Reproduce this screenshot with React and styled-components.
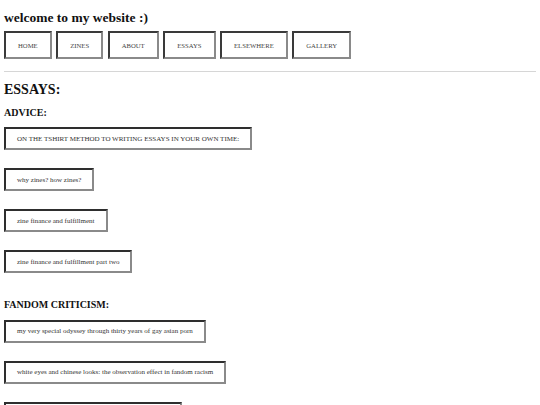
import styled, { createGlobalStyle } from 'styled-components';

const GlobalStyle = createGlobalStyle`
  html, body {
    margin: 0;
    padding: 0;
    background: #ffffff;
  }
  body {
    font-family: "Liberation Serif", "Times New Roman", serif;
    color: #111111;
  }
`;

const Page = styled.div`
  display: flex;
  flex-direction: column;
  padding: 10px 4px 0;
`;

const Title = styled.h1`
  font-size: 13.5px;
  font-weight: bold;
  line-height: 15px;
  margin: 0;
`;

const Nav = styled.nav`
  display: flex;
  gap: 4.5px;
  margin-top: 6px;
`;

const NavButton = styled.a`
  display: flex;
  align-items: center;
  height: 28px;
  box-sizing: border-box;
  padding: 0 12px;
  font-size: 6.7px;
  text-transform: uppercase;
  color: #444444;
  border: 2px solid;
  border-color: #3a3a3a #8a8a8a #8a8a8a #3a3a3a;
  cursor: pointer;
`;

const Rule = styled.hr`
  border: none;
  border-top: 1px solid #d6d6d6;
  margin: 12px 0 0;
  width: 100%;
`;

const PageHeading = styled.h2`
  font-size: 14px;
  line-height: 15.5px;
  font-weight: bold;
  margin: 9.5px 0 0;
`;

const SectionHeading = styled.h3`
  font-size: 10px;
  line-height: 11px;
  font-weight: bold;
  margin: ${(p) => p.$gap}px 0 0;
`;

const LinkList = styled.div`
  display: flex;
  flex-direction: column;
  align-items: flex-start;
  gap: 18px;
  margin-top: 9.5px;
`;

const LinkBox = styled.a`
  display: flex;
  align-items: center;
  height: 23px;
  box-sizing: border-box;
  padding: 0 11px;
  font-size: 7px;
  color: #333333;
  border: 2px solid;
  border-color: #2e2e2e #8a8a8a #8a8a8a #2e2e2e;
  cursor: pointer;
`;

const navItems = ['Home', 'Zines', 'About', 'Essays', 'Elsewhere', 'Gallery'];

const sections = [
  {
    title: 'ADVICE:',
    gap: 9.5,
    links: [
      'ON THE TSHIRT METHOD TO WRITING ESSAYS IN YOUR OWN TIME:',
      'why zines? how zines?',
      'zine finance and fulfillment',
      'zine finance and fulfillment part two',
    ],
  },
  {
    title: 'FANDOM CRITICISM:',
    gap: 26,
    links: [
      'my very special odyssey through thirty years of gay asian porn',
      'white eyes and chinese looks: the observation effect in fandom racism',
      'on fandom, fanfiction and the stories we tell ourselves',
    ],
  },
];

function App() {
  return (
    <>
      <GlobalStyle />
      <Page>
        <Title>welcome to my website :)</Title>
        <Nav>
          {navItems.map((item) => (
            <NavButton key={item}>{item}</NavButton>
          ))}
        </Nav>
        <Rule />
        <PageHeading>ESSAYS:</PageHeading>
        {sections.map((section) => (
          <section key={section.title}>
            <SectionHeading $gap={section.gap}>{section.title}</SectionHeading>
            <LinkList>
              {section.links.map((link) => (
                <LinkBox key={link}>{link}</LinkBox>
              ))}
            </LinkList>
          </section>
        ))}
      </Page>
    </>
  );
}

export default App;
